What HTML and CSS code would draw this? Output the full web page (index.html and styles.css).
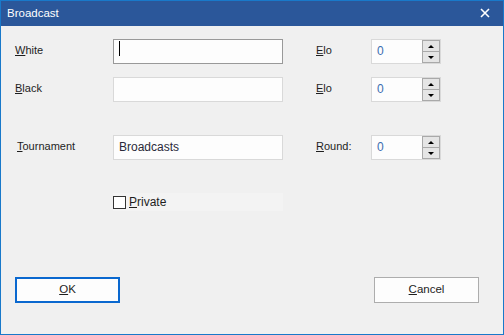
FILE: index.html
```html
<!DOCTYPE html>
<html lang="en">
<head>
    <meta charset="UTF-8">
    <meta name="viewport" content="width=device-width, initial-scale=1.0">
    <title>Broadcast</title>
    <link rel="stylesheet" href="styles.css">
</head>
<body>
    <div class="window">
        <div class="titlebar">
            <span class="title">Broadcast</span>
            <svg class="close" width="10" height="10" viewBox="0 0 10 10">
                <path d="M1 1 L9 9 M9 1 L1 9" stroke="#ffffff" stroke-width="1.6" fill="none"/>
            </svg>
        </div>

        <div class="content">
            <div class="row first">
                <label class="label"><u>W</u>hite</label>
                <div class="textbox focused"><span class="caret"></span></div>
                <span class="gap"></span>
                <label class="label"><u>E</u>lo</label>
                <div class="spin">
                    <span class="spin-value">0</span>
                    <div class="spin-buttons">
                        <span class="spin-btn"><span class="arrow up"></span></span>
                        <span class="spin-btn"><span class="arrow down"></span></span>
                    </div>
                </div>
            </div>

            <div class="row">
                <label class="label"><u>B</u>lack</label>
                <div class="textbox"></div>
                <span class="gap"></span>
                <label class="label"><u>E</u>lo</label>
                <div class="spin">
                    <span class="spin-value">0</span>
                    <div class="spin-buttons">
                        <span class="spin-btn"><span class="arrow up"></span></span>
                        <span class="spin-btn"><span class="arrow down"></span></span>
                    </div>
                </div>
            </div>

            <div class="row wide">
                <label class="label indent"><u>T</u>ournament</label>
                <div class="textbox">Broadcasts</div>
                <span class="gap"></span>
                <label class="label"><u>R</u>ound:</label>
                <div class="spin">
                    <span class="spin-value">0</span>
                    <div class="spin-buttons">
                        <span class="spin-btn"><span class="arrow up"></span></span>
                        <span class="spin-btn"><span class="arrow down"></span></span>
                    </div>
                </div>
            </div>

            <div class="row check-row">
                <span class="label"></span>
                <div class="check-panel">
                    <span class="checkbox"></span>
                    <span class="check-text"><u>P</u>rivate</span>
                </div>
            </div>
        </div>

        <div class="buttons">
            <button class="btn default"><u>O</u>K</button>
            <button class="btn"><u>C</u>ancel</button>
        </div>
    </div>
</body>
</html>
```

FILE: styles.css
```css
body {
    margin: 0;
    font-family: "Liberation Sans", Arial, sans-serif;
    font-size: 11px;
    color: #1e1e1e;
}
.window {
    width: 504px;
    height: 335px;
    box-sizing: border-box;
    border: 1px solid #1979ca;
    border-top: none;
    background-color: #f0f0f0;
    display: flex;
    flex-direction: column;
}
.titlebar {
    height: 26px;
    box-sizing: border-box;
    border-top: 1px solid #1979ca;
    background-color: #2b579a;
    color: #ffffff;
    display: flex;
    align-items: center;
    padding: 0 13px 0 6px;
}
.title {
    flex: 1;
    font-size: 11.5px;
    margin-top: -1px;
}
.close {
    margin-top: -2px;
}
.content {
    padding: 13px 0 0 14px;
    flex: 1;
}
.row {
    display: flex;
    align-items: center;
    height: 25px;
    margin-bottom: 13px;
}
.row.wide {
    margin-top: 33px;
    margin-bottom: 33px;
}
.row.check-row {
    height: 18px;
}
.label {
    width: 98px;
    flex-shrink: 0;
    margin-top: -3px;
}
.label.indent {
    padding-left: 2px;
    width: 96px;
}
.row .label:nth-of-type(2) {
    width: 55px;
}
.gap {
    width: 33px;
}
.textbox {
    width: 170px;
    height: 25px;
    box-sizing: border-box;
    border: 1px solid #d9d9d9;
    background-color: #fdfdfd;
    padding: 4px 0 0 5px;
    font-size: 12px;
    color: #2a2a3a;
    position: relative;
}
.textbox.focused {
    border-color: #999999;
}
.caret {
    position: absolute;
    left: 5px;
    top: 1px;
    width: 1px;
    height: 15px;
    background-color: #000000;
}
.spin {
    width: 70px;
    height: 25px;
    box-sizing: border-box;
    border: 1px solid #d9d9d9;
    background-color: #fdfdfd;
    display: flex;
}
.spin-value {
    flex: 1;
    padding: 4px 0 0 5px;
    color: #3c6db0;
    font-size: 12px;
}
.spin-buttons {
    width: 18px;
    display: flex;
    flex-direction: column;
}
.spin-btn {
    flex: 1;
    box-sizing: border-box;
    border: 1px solid #a9a9a9;
    background-color: #e5e5e5;
    display: flex;
    align-items: center;
    justify-content: center;
}
.spin-btn + .spin-btn {
    border-top: none;
}
.arrow {
    width: 0;
    height: 0;
    border-left: 3px solid transparent;
    border-right: 3px solid transparent;
}
.arrow.up {
    border-bottom: 3px solid #000000;
}
.arrow.down {
    border-top: 3px solid #000000;
}
.check-panel {
    width: 170px;
    height: 18px;
    background-color: #f3f3f3;
    display: flex;
    align-items: center;
}
.checkbox {
    width: 13px;
    height: 13px;
    box-sizing: border-box;
    border: 1px solid #333333;
    background-color: #ffffff;
    margin-right: 3px;
}
.check-text {
    font-size: 12px;
    margin-top: -1px;
}
.buttons {
    display: flex;
    justify-content: space-between;
    padding: 0 24px 31px 14px;
}
.btn {
    width: 105px;
    height: 26px;
    box-sizing: border-box;
    border: 1px solid #adadad;
    background-color: #fdfdfd;
    font-family: "Liberation Sans", Arial, sans-serif;
    font-size: 11.5px;
    color: #1e1e1e;
    padding: 0 0 2px 0;
}
.btn.default {
    border: 2px solid #0a68cf;
}
```
